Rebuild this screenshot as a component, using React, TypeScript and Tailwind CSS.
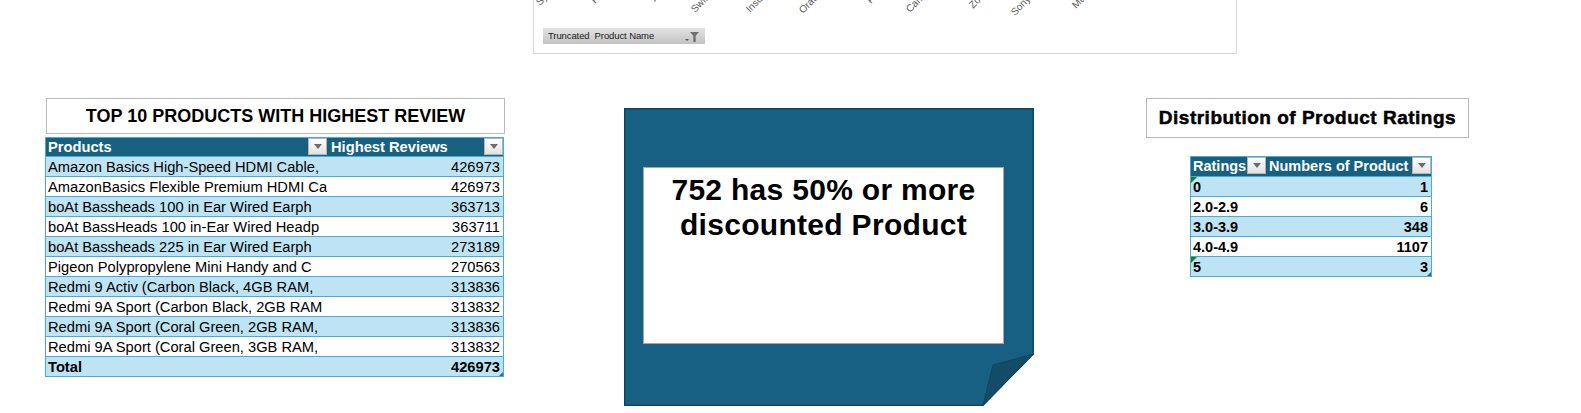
import React from "react";

const axisLabels = [
  { text: "Syska SW1", x: 8, y: 8 },
  { text: "REDTECH", x: 63, y: 6 },
  { text: "Amazon", x: 123, y: 4 },
  { text: "Swiffer In", x: 163, y: 15 },
  { text: "Instaprint", x: 218, y: 15 },
  { text: "Oratech C", x: 271, y: 16 },
  { text: "Flix Mic", x: 339, y: 6 },
  { text: "Campfire", x: 378, y: 15 },
  { text: "Zoul US", x: 441, y: 11 },
  { text: "Sony TV -", x: 483, y: 18 },
  { text: "Muvi 3 i", x: 544, y: 11 },
];

const topProducts = [
  ["Amazon Basics High-Speed HDMI Cable,", "426973"],
  ["AmazonBasics Flexible Premium HDMI Ca", "426973"],
  ["boAt Bassheads 100 in Ear Wired Earph", "363713"],
  ["boAt BassHeads 100 in-Ear Wired Headp", "363711"],
  ["boAt Bassheads 225 in Ear Wired Earph", "273189"],
  ["Pigeon Polypropylene Mini Handy and C", "270563"],
  ["Redmi 9 Activ (Carbon Black, 4GB RAM,", "313836"],
  ["Redmi 9A Sport (Carbon Black, 2GB RAM", "313832"],
  ["Redmi 9A Sport (Coral Green, 2GB RAM,", "313836"],
  ["Redmi 9A Sport (Coral Green, 3GB RAM,", "313832"],
];

const ratings = [
  { label: "0", count: "1", flag: true },
  { label: "2.0-2.9", count: "6", flag: false },
  { label: "3.0-3.9", count: "348", flag: false },
  { label: "4.0-4.9", count: "1107", flag: false },
  { label: "5", count: "3", flag: true },
];

function DropBtn() {
  return (
    <div className="w-[19px] h-[17px] shrink-0 self-start border border-[#b4b4b4] bg-linear-to-b from-white to-[#e2e2e2] flex items-center justify-center">
      <svg width="8" height="5" viewBox="0 0 8 5">
        <path d="M0 0h8L4 5z" fill="#6b6b6b" />
      </svg>
    </div>
  );
}

function CornerMark() {
  return (
    <svg width="4" height="4" viewBox="0 0 4 4" className="absolute right-0 bottom-0">
      <path d="M4 0V4H0z" fill="#3d5ea8" />
    </svg>
  );
}

function ChartStrip() {
  return (
    <div className="relative h-[54px] w-[704px] ml-[533px] border-x border-b border-[#d9d9d9] overflow-hidden pt-[28px] pl-[9px]">
      {axisLabels.map((l) => (
        <div
          key={l.text}
          className="absolute origin-bottom-left -rotate-45 whitespace-nowrap text-[10px] leading-[12px] text-[#595959]"
          style={{ left: l.x, top: l.y - 12 }}
        >
          {l.text}
        </div>
      ))}
      <div className="w-[162px] h-[16px] flex items-center pl-[5px] pr-[5px] bg-linear-to-b from-[#e4e4e4] to-[#c2c2c2] text-[9.5px] text-[#1a1a1a]">
        <span className="flex-1 tracking-[-0.1px]">Truncated&nbsp; Product Name</span>
        <svg width="16" height="11" viewBox="0 0 16 11">
          <path d="M1 8h4L3 10z" fill="#555" />
          <path d="M6 1h9l-3.3 3.8V11H9.3V4.8z" fill="#707070" />
        </svg>
      </div>
    </div>
  );
}

function TopProducts() {
  return (
    <div className="w-[460px]">
      <div className="ml-px w-[459px] h-[36px] border border-[#b9b9b9] flex items-center justify-center text-[18px] font-bold text-black">
        TOP 10 PRODUCTS WITH HIGHEST REVIEW
      </div>
      <div className="relative mt-[3px] w-[459px] border border-[#46ace0] text-[14.7px] text-black">
        <div className="flex h-[18px] bg-[#186080] text-white font-bold">
          <div className="w-[281px] flex pl-[2px]">
            <span className="flex-1 leading-[16px] pt-[1px]">Products</span>
            <DropBtn />
          </div>
          <div className="flex-1 flex pl-[4px]">
            <span className="flex-1 leading-[16px] pt-[1px]">Highest Reviews</span>
            <DropBtn />
          </div>
        </div>
        {topProducts.map(([name, val], i) => (
          <div
            key={name}
            className={`flex h-[20px] border-t border-[#46ace0] ${i % 2 === 0 ? "bg-[#bee4f4]" : "bg-white"}`}
          >
            <div className="w-[281px] pl-[2px] pt-[2px] leading-[16px] whitespace-nowrap overflow-hidden">{name}</div>
            <div className="flex-1 pr-[3px] pt-[2px] leading-[16px] text-right">{val}</div>
          </div>
        ))}
        <div className="flex h-[20px] border-t border-[#46ace0] bg-[#bee4f4] font-bold">
          <div className="w-[281px] pl-[2px] pt-[2px] leading-[16px]">Total</div>
          <div className="flex-1 pr-[3px] pt-[2px] leading-[16px] text-right">426973</div>
        </div>
        <CornerMark />
      </div>
    </div>
  );
}

function DiscountCallout() {
  return (
    <div className="relative ml-[119px] mt-[10px] w-[410px] h-[298px]">
      <svg width="410" height="298" viewBox="0 0 410 298" className="absolute inset-0">
        <path d="M0.75 0.75H409.25V246L359 297.25H0.75z" fill="#186083" stroke="#0e4660" strokeWidth="1.5" />
        <path d="M409.25 246L369 257L359 297.25z" fill="#134c69" stroke="#0e4660" strokeWidth="1" />
      </svg>
      <div className="relative pl-[19px] pt-[59px]">
        <div className="w-[361px] h-[177px] bg-white border border-[#a6a6a6] pt-[4px] text-center font-bold text-[30px] leading-[35px] tracking-[0.3px] text-black">
          752 has 50% or more
          <br />
          discounted Product
        </div>
      </div>
    </div>
  );
}

function RatingsDistribution() {
  return (
    <div className="ml-[112px] mt-0">
      <div className="w-[323px] h-[40px] border border-[#b9b9b9] flex items-center justify-center text-[19px] font-bold tracking-[0.5px] text-black [-webkit-text-stroke:0.5px_black]">
        Distribution of Product Ratings
      </div>
      <div className="relative ml-[44px] mt-[18px] w-[242px] border border-[#46ace0] text-[14.5px] font-bold text-black">
        <div className="flex h-[19px] bg-[#186080] text-white">
          <div className="w-[75px] flex pl-[2px]">
            <span className="flex-1 overflow-hidden whitespace-nowrap leading-[16px] pt-[1px]">Ratings</span>
            <DropBtn />
          </div>
          <div className="flex-1 min-w-0 flex pl-[3px]">
            <span className="flex-1 min-w-0 overflow-hidden whitespace-nowrap leading-[16px] pt-[1px]">Numbers of Product</span>
            <DropBtn />
          </div>
        </div>
        {ratings.map((r, i) => (
          <div
            key={r.label}
            className={`relative flex h-[20px] border-t border-[#46ace0] ${i % 2 === 0 ? "bg-[#bee4f4]" : "bg-white"}`}
          >
            {r.flag && (
              <svg width="6" height="6" viewBox="0 0 6 6" className="absolute left-0 top-0">
                <path d="M0 0H6L0 6z" fill="#1d7d1d" />
              </svg>
            )}
            <div className="w-[75px] pl-[2px] pt-[2px] leading-[16px]">{r.label}</div>
            <div className="flex-1 pr-[3px] pt-[2px] leading-[16px] text-right">{r.count}</div>
          </div>
        ))}
        <CornerMark />
      </div>
    </div>
  );
}

export default function App() {
  return (
    <div className="w-[1581px] h-[413px] overflow-hidden bg-white font-['Liberation_Sans',Arial,sans-serif]">
      <ChartStrip />
      <div className="flex items-start mt-[44px] pl-[45px]">
        <TopProducts />
        <DiscountCallout />
        <RatingsDistribution />
      </div>
    </div>
  );
}
